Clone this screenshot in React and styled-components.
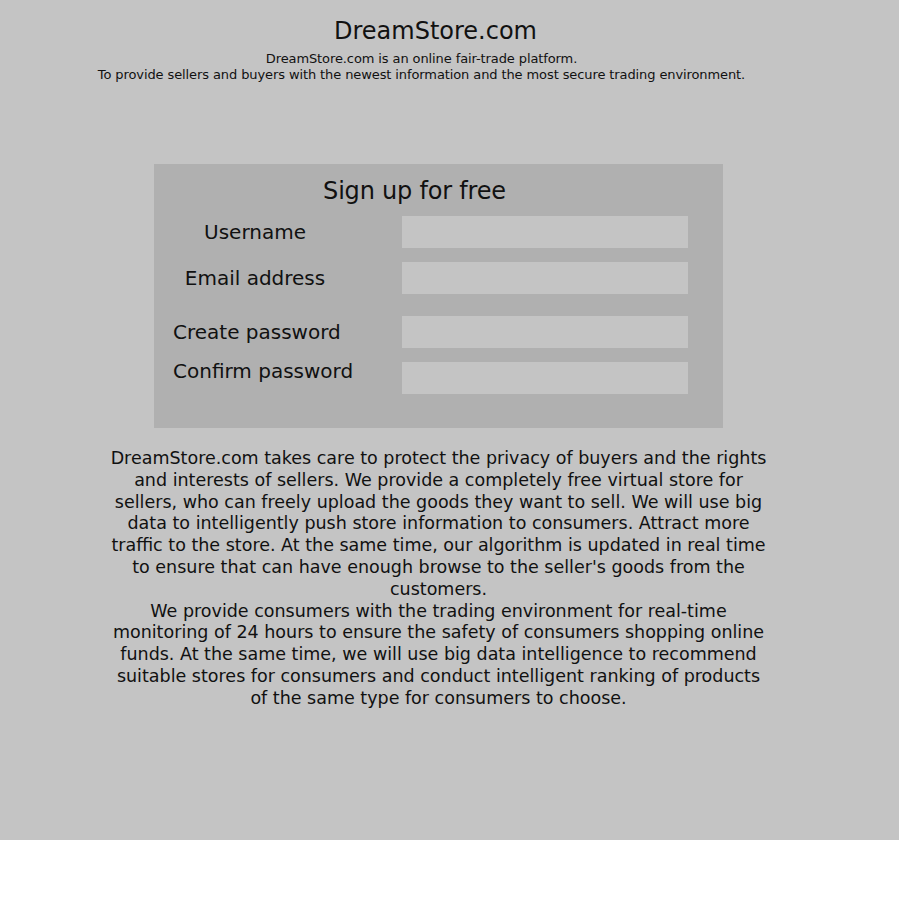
import React from "react";
import styled, { createGlobalStyle } from "styled-components";

const Global = createGlobalStyle`
  html, body { margin: 0; padding: 0; background: #ffffff; }
  body { font-family: "DejaVu Sans", "Open Sans", sans-serif; color: #111; }
`;

const Page = styled.div`
  background: #c4c4c4;
  height: 840px;
  width: 899px;
  box-sizing: border-box;
  padding: 16px 22px 0 0;
  display: flex;
  flex-direction: column;
  align-items: center;
`;

const Header = styled.header`
  display: flex;
  flex-direction: column;
  align-items: center;
  width: 100%;
`;

const Title = styled.h1`
  margin: 0 0 0 -6px;
  font-size: 24px;
  font-weight: 400;
  line-height: 30px;
`;

const Tagline = styled.p`
  margin: 5px 0 0 -34px;
  font-size: 13px;
  line-height: 16px;
  text-align: center;
  letter-spacing: -0.1px;
`;

const Panel = styled.form`
  margin-top: 81px;
  width: 569px;
  height: 264px;
  box-sizing: border-box;
  background: #b0b0b0;
  padding: 11px 35px 0 19px;
  display: flex;
  flex-direction: column;
`;

const PanelTitle = styled.h2`
  margin: 0 0 0 -32px;
  font-size: 24px;
  font-weight: 400;
  line-height: 32px;
  text-align: center;
  letter-spacing: -0.2px;
`;

const Row = styled.div`
  display: grid;
  grid-template-columns: 164px 1fr;
  column-gap: 65px;
  align-items: center;
  margin-top: ${(p) => p.$gap}px;
`;

const Label = styled.label`
  font-size: 20px;
  line-height: 24px;
  text-align: center;
  white-space: nowrap;
  transform: translateY(${(p) => p.$shift || 0}px);
`;

const Input = styled.input`
  width: 286px;
  height: 32px;
  box-sizing: border-box;
  border: none;
  background: #c4c4c4;
  outline: none;
  padding: 0 8px;
`;

const About = styled.div`
  margin-top: 20px;
  width: 664px;
  font-size: 17.5px;
  line-height: 21.8px;
  text-align: center;
`;

const Para = styled.p`
  margin: 0;
`;

const fields = [
  { label: "Username", gap: 9, type: "text" },
  { label: "Email address", gap: 14, type: "email" },
  { label: "Create password", gap: 22, type: "password" },
  { label: "Confirm password", gap: 14, type: "password", shift: -7 },
];

export default function App() {
  return (
    <>
      <Global />
      <Page>
        <Header>
          <Title>DreamStore.com</Title>
          <Tagline>
            DreamStore.com is an online fair-trade platform.
            <br />
            To provide sellers and buyers with the newest information and the most secure trading environment.
          </Tagline>
        </Header>
        <Panel onSubmit={(e) => e.preventDefault()}>
          <PanelTitle>Sign up for free</PanelTitle>
          {fields.map((f) => (
            <Row key={f.label} $gap={f.gap}>
              <Label $shift={f.shift}>{f.label}</Label>
              <Input type={f.type} />
            </Row>
          ))}
        </Panel>
        <About>
          <Para>
            DreamStore.com takes care to protect the privacy of buyers and the rights and interests of sellers. We provide a completely free virtual store for sellers, who can freely upload the goods they want to sell. We will use big data to intelligently push store information to consumers. Attract more traffic to the store. At the same time, our algorithm is updated in real time to ensure that can have enough browse to the seller's goods from the customers.
          </Para>
          <Para>
            We provide consumers with the trading environment for real-time monitoring of 24 hours to ensure the safety of consumers shopping online funds. At the same time, we will use big data intelligence to recommend suitable stores for consumers and conduct intelligent ranking of products of the same type for consumers to choose.
          </Para>
        </About>
      </Page>
    </>
  );
}
